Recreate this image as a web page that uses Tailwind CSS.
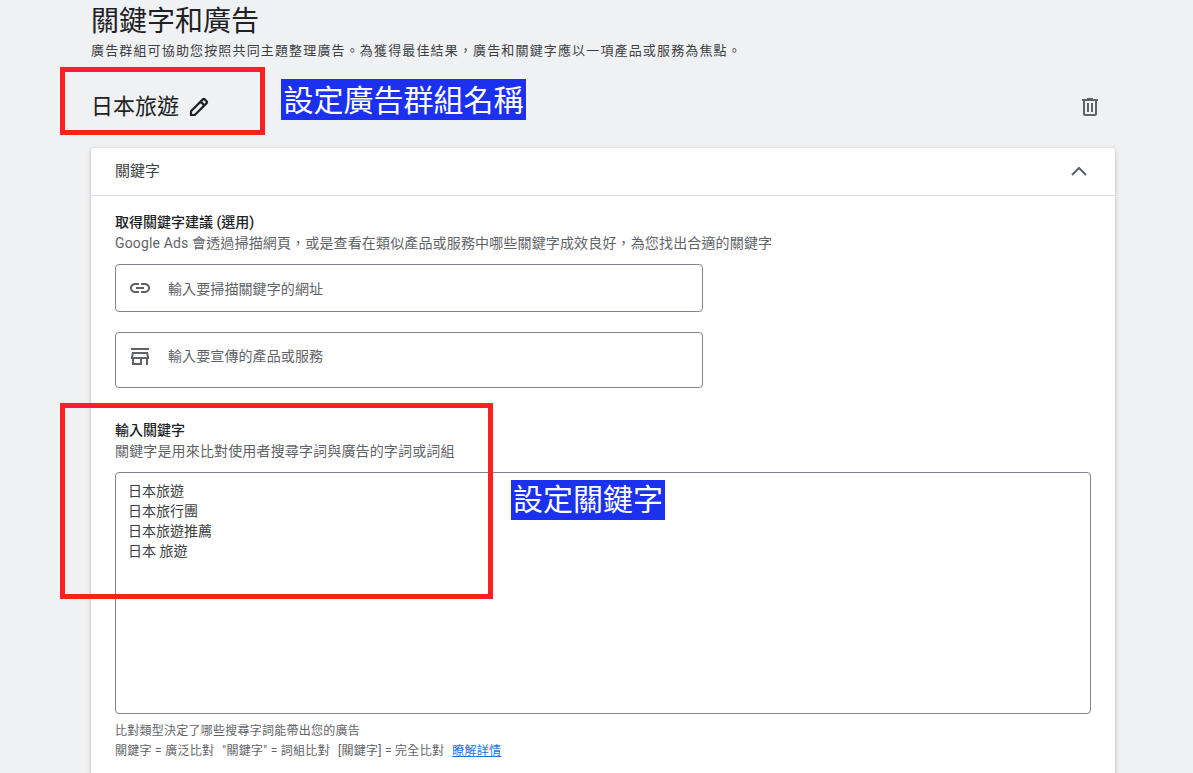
<!DOCTYPE html>
<html lang="zh-TW">
<head>
    <meta charset="UTF-8">
    <title>關鍵字和廣告</title>
    <script src="https://cdn.jsdelivr.net/npm/@tailwindcss/browser@4"></script>
</head>
<body class="relative h-[773px] overflow-hidden bg-[#f0f1f3] font-['Roboto','Noto_Sans_CJK_TC',sans-serif] text-[#3c4043]">

    <div class="pl-[91px] pr-[78px]">
        <!-- page heading -->
        <h1 class="pt-[4px] text-[28px] leading-[36px] font-normal text-[#202124]">關鍵字和廣告</h1>
        <p class="mt-[1px] text-[13px] leading-[20px] tracking-[1.15px] text-[#3c4043]">廣告群組可協助您按照共同主題整理廣告。為獲得最佳結果&#xFF0C;廣告和關鍵字應以一項產品或服務為焦點。</p>

        <!-- ad group name -->
        <div class="flex items-center h-[87px] pt-[5px] pr-[13px]">
            <span class="text-[22px] text-[#202124] leading-[28px]">日本旅遊</span>
            <svg class="ml-[8px]" width="24" height="24" viewBox="0 0 24 24" fill="none" stroke="#202124" stroke-width="2.2"><path d="M4 20v-3.8L15.6 4.6a1.7 1.7 0 0 1 2.4 0l1.4 1.4a1.7 1.7 0 0 1 0 2.4L7.8 20zM13.6 6.6l3.8 3.8"/></svg>
            <svg class="ml-auto" width="24" height="24" viewBox="0 0 24 24" fill="#5f6368"><path d="M15 4V3H9v1H4v2h1v13c0 1.1.9 2 2 2h10c1.1 0 2-.9 2-2V6h1V4h-5zm2 15H7V6h10v13zM9 8h2v9H9zm4 0h2v9h-2z"/></svg>
        </div>

        <!-- keywords card -->
        <div class="bg-white rounded-t-[4px] shadow-[0_1px_4px_rgba(60,64,67,0.3)] h-[640px]">
            <div class="flex items-center justify-between h-[48px] pl-[24px] pr-[24px] border-b border-[#dadce0]">
                <span class="text-[15px] text-[#3c4043]">關鍵字</span>
                <svg class="-mt-[2px]" width="24" height="24" viewBox="0 0 24 24" fill="none" stroke="#5f6368" stroke-width="2"><path d="M5 16l7-7 7 7"/></svg>
            </div>

            <div class="px-[24px] pt-[16px]">
                <h2 class="text-[14px] leading-[20px] font-medium text-[#202124]">取得關鍵字建議 (選用)</h2>
                <p class="text-[14px] leading-[22px] tracking-[0.15px] text-[#5f6368]">Google Ads 會透過掃描網頁&#xFF0C;或是查看在類似產品或服務中哪些關鍵字成效良好&#xFF0C;為您找出合適的關鍵字</p>

                <div class="flex items-center w-[588px] h-[48px] mt-[10px] pl-[12px] border border-[#80868b] rounded-[4px]">
                    <svg width="24" height="24" viewBox="0 0 24 24" fill="#5f6368"><path d="M3.9 12c0-1.71 1.39-3.1 3.1-3.1h4V7H7c-2.76 0-5 2.24-5 5s2.24 5 5 5h4v-1.9H7c-1.71 0-3.1-1.39-3.1-3.1zM8 13h8v-2H8v2zm9-6h-4v1.9h4c1.71 0 3.1 1.39 3.1 3.1s-1.39 3.1-3.1 3.1h-4V17h4c2.76 0 5-2.24 5-5s-2.24-5-5-5z"/></svg>
                    <span class="ml-[16px] pt-[3px] text-[14px] tracking-[0.1px] text-[#5f6368]">輸入要掃描關鍵字的網址</span>
                </div>

                <div class="flex items-start w-[588px] h-[56px] mt-[20px] pt-[11px] pl-[12px] border border-[#80868b] rounded-[4px]">
                    <svg width="24" height="24" viewBox="0 0 24 24" fill="#5f6368"><path d="M3 4h18v2H3zM4 8h16l1 5v2h-1v6h-2v-6h-4v6H4v-6H3v-2zm2 7v4h6v-4zM5.1 13h13.8l-.6-3H5.7z"/></svg>
                    <span class="ml-[16px] text-[14px] leading-[24px] tracking-[0.1px] text-[#5f6368]">輸入要宣傳的產品或服務</span>
                </div>

                <h2 class="mt-[32px] text-[14px] leading-[20px] font-medium text-[#202124]">輸入關鍵字</h2>
                <p class="text-[14px] leading-[22px] tracking-[0.15px] text-[#5f6368]">關鍵字是用來比對使用者搜尋字詞與廣告的字詞或詞組</p>

                <div class="w-[976px] h-[242px] mt-[10px] pt-[8px] pl-[12px] border border-[#80868b] rounded-[4px] text-[14px] leading-[20px] text-[#3c4043]">
                    <div>日本旅遊</div>
                    <div>日本旅行團</div>
                    <div>日本旅遊推薦</div>
                    <div>日本 旅遊</div>
                </div>

                <p class="mt-[7px] text-[12px] leading-[20px] tracking-[0.25px] text-[#5f6368]">比對類型決定了哪些搜尋字詞能帶出您的廣告</p>
                <p class="flex gap-[8px] text-[12px] leading-[20px] tracking-[0.28px] text-[#5f6368]">
                    <span>關鍵字 = 廣泛比對</span>
                    <span>"關鍵字" = 詞組比對</span>
                    <span>[關鍵字] = 完全比對</span>
                    <a class="text-[#1a73e8] underline">瞭解詳情</a>
                </p>
            </div>
        </div>
    </div>

    <!-- annotations laid over the screenshot -->
    <div class="absolute left-[60px] top-[67px] w-[205px] h-[68px] border-[5px] border-[#fc2020]"></div>
    <div class="absolute left-[60px] top-[403px] w-[433px] h-[196px] border-[5px] border-[#fc2020]"></div>
    <div class="absolute left-[281px] top-[79px] w-[245px] h-[41px] bg-[#1c31f0] text-[30px] leading-[43px] text-center text-white whitespace-nowrap">設定廣告群組名稱</div>
    <div class="absolute left-[511px] top-[480px] w-[154px] h-[40px] bg-[#1c31f0] text-[30px] leading-[40px] text-center text-white whitespace-nowrap">設定關鍵字</div>

</body>
</html>
